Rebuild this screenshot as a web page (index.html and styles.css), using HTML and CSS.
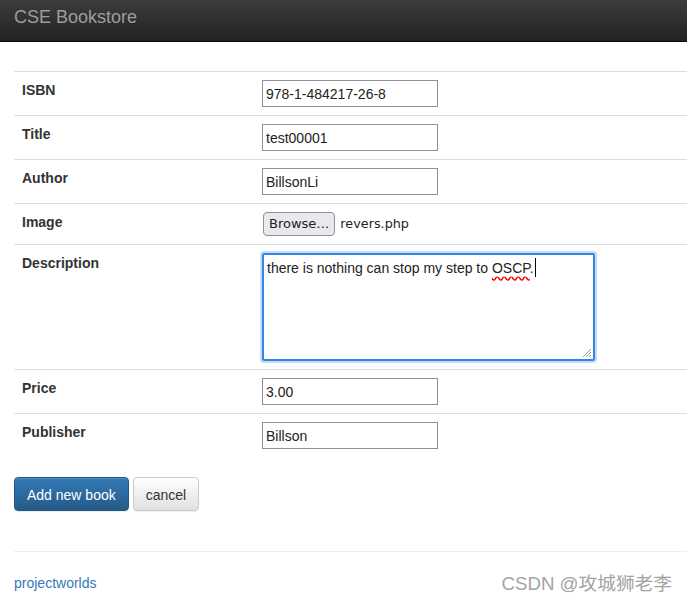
FILE: index.html
```html
<!DOCTYPE html>
<html lang="en">
<head>
<meta charset="utf-8">
<title>CSE Bookstore</title>
<link rel="stylesheet" href="styles.css">
</head>
<body>
<nav class="navbar"><span class="brand">CSE Bookstore</span></nav>
<main class="container">
  <form class="book-form">
    <table class="form-table">
      <tr><th>ISBN</th><td><input class="field" type="text" value="978-1-484217-26-8"></td></tr>
      <tr><th>Title</th><td><input class="field" type="text" value="test00001"></td></tr>
      <tr><th>Author</th><td><input class="field" type="text" value="BillsonLi"></td></tr>
      <tr class="file-row"><th>Image</th><td><div class="file-input"><span class="browse">Browse…</span><span class="file-name">revers.php</span></div></td></tr>
      <tr><th>Description</th><td>
        <div class="textarea" role="textbox">there is nothing can stop my step to <span class="misspelled">OSCP</span>.<span class="caret"></span>
          <svg class="grip" width="10" height="10" viewBox="0 0 10 10"><path d="M9 1L1 9M9 4L4 9M9 7L7 9" stroke="#999" stroke-width="1"/></svg>
        </div>
      </td></tr>
      <tr><th>Price</th><td><input class="field" type="text" value="3.00"></td></tr>
      <tr><th>Publisher</th><td><input class="field" type="text" value="Billson"></td></tr>
    </table>
    <div class="actions">
      <button type="button" class="btn btn-primary">Add new book</button>
      <button type="button" class="btn btn-default">cancel</button>
    </div>
  </form>
  <hr class="rule">
  <footer class="footer"><a class="footer-link" href="#">projectworlds</a></footer>
</main>
<div class="watermark">CSDN @攻城狮老李</div>
</body>
</html>
```
FILE: styles.css
```css
html, body {
  margin: 0;
  padding: 0;
}
body {
  font-family: "Liberation Sans", Arial, sans-serif;
  font-size: 14px;
  line-height: 20px;
  color: #333;
  background: #fff;
  position: relative;
  height: 603px;
  overflow: hidden;
}
.navbar {
  box-sizing: border-box;
  height: 42px;
  padding: 7px 14px;
  background: linear-gradient(to bottom, #3c3c3c 0%, #222 100%);
  border-bottom: 1px solid #080808;
}
.brand {
  font-size: 18px;
  line-height: 20px;
  color: #9d9d9d;
}
.container {
  padding-left: 14px;
  padding-top: 29px;
}
.form-table {
  width: 100%;
  border-collapse: separate;
  border-spacing: 0;
}
.form-table th,
.form-table td {
  border-top: 1px solid #ddd;
  padding: 8px;
  vertical-align: top;
  text-align: left;
}
.form-table th {
  width: 224px;
  font-weight: bold;
}
.field {
  display: block;
  box-sizing: border-box;
  width: 176px;
  height: 27px;
  margin: 0;
  padding: 1px 3px;
  border: 1px solid #8f8f9d;
  border-radius: 0;
  font-family: "Liberation Sans", Arial, sans-serif;
  font-size: 14px;
  color: #222;
  background: #fff;
}
.file-input {
  display: flex;
  align-items: center;
  gap: 5px;
  height: 24px;
}
.browse {
  box-sizing: border-box;
  height: 24px;
  margin-left: 1px;
  padding: 1px 5px;
  line-height: 20px;
  background: #e9e9ed;
  border: 1px solid #8f8f9d;
  border-radius: 4px;
  color: #222;
  font-family: "DejaVu Sans", sans-serif;
  font-size: 13px;
}
.file-name {
  font-family: "DejaVu Sans", sans-serif;
  font-size: 12.8px;
  color: #222;
}
.textarea {
  position: relative;
  box-sizing: border-box;
  width: 333px;
  height: 108px;
  padding: 2px 3px;
  border: 2px solid #3584e4;
  border-radius: 2px;
  box-shadow: 0 0 0 2px #c6ddf7;
  color: #222;
  line-height: 22px;
}
.misspelled {
  text-decoration: underline wavy #e00;
  text-underline-offset: 3px;
}
.caret {
  display: inline-block;
  width: 1px;
  height: 19px;
  margin-left: 1px;
  vertical-align: -4px;
  background: #000;
}
.grip {
  position: absolute;
  right: 1px;
  bottom: 1px;
}
.actions {
  display: flex;
  gap: 4px;
  margin-top: 20px;
}
.btn {
  box-sizing: border-box;
  height: 34px;
  padding: 7px 12px 5px;
  font-family: "Liberation Sans", Arial, sans-serif;
  font-size: 14px;
  line-height: 20px;
  border-radius: 4px;
  border: 1px solid;
  cursor: pointer;
}
.btn-primary {
  color: #fff;
  background: linear-gradient(to bottom, #337ab7 0%, #265a88 100%);
  border-color: #245580;
  box-shadow: inset 0 1px 0 rgba(255,255,255,.15), 0 1px 1px rgba(0,0,0,.075);
}
.btn-default {
  color: #333;
  background: linear-gradient(to bottom, #fff 0%, #e0e0e0 100%);
  border-color: #ccc;
  box-shadow: inset 0 1px 0 rgba(255,255,255,.15), 0 1px 1px rgba(0,0,0,.075);
}
.rule {
  margin: 40px 0 0;
  border: 0;
  border-top: 1px solid #eee;
}
.footer {
  padding-top: 21px;
}
.footer-link {
  color: #337ab7;
  text-decoration: none;
}
.watermark {
  position: absolute;
  right: 15px;
  bottom: 9px;
  font-family: "Liberation Sans", "Noto Sans CJK SC", sans-serif;
  font-size: 18.7px;
  line-height: 20px;
  color: #a3a3a3;
  text-shadow: 0 0 1px #fff;
}
```
